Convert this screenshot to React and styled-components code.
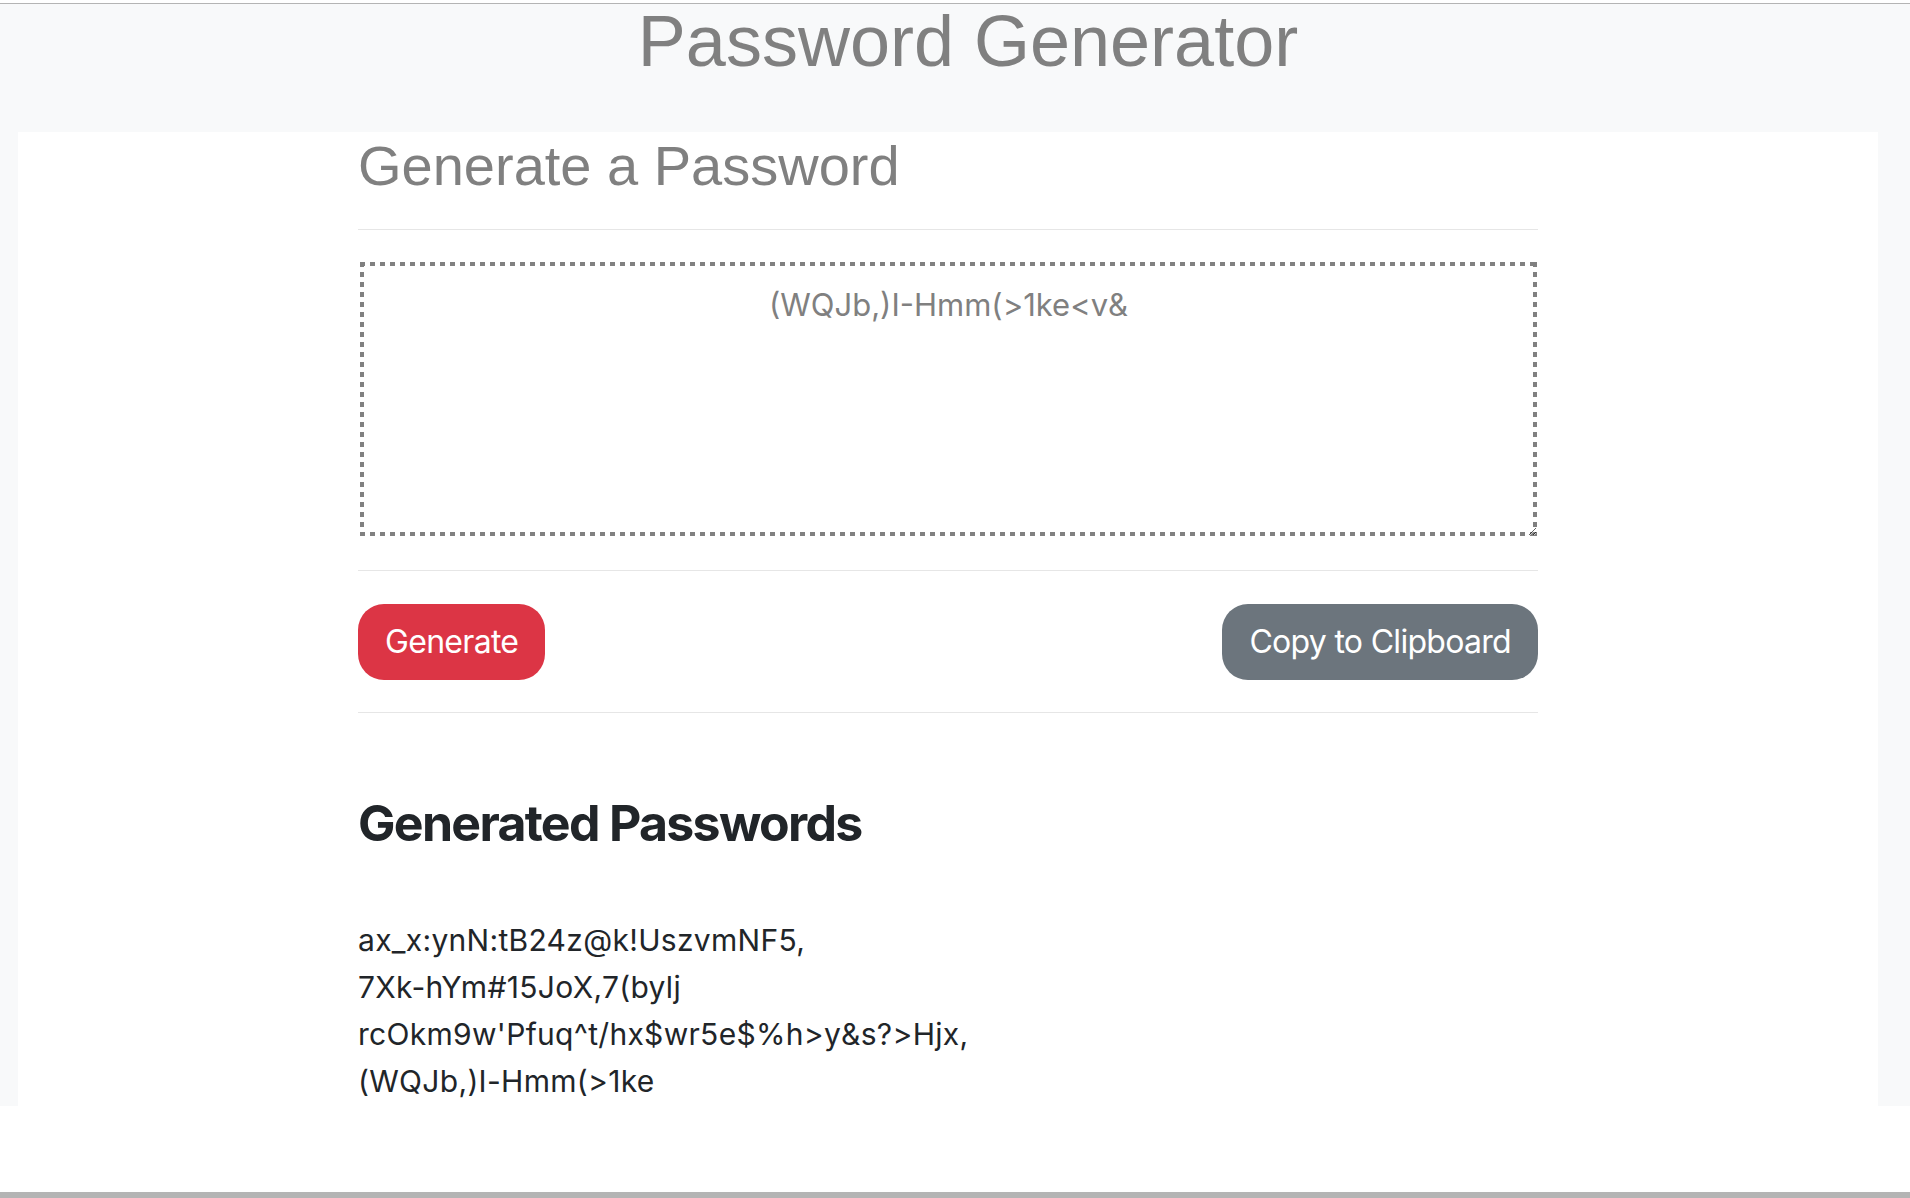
import React from "react";
import styled, { createGlobalStyle } from "styled-components";

const GlobalStyle = createGlobalStyle`
  html, body {
    margin: 0;
    background: #fff;
  }
  body {
    font-family: Inter, "Noto Sans", sans-serif;
    color: #212529;
  }
`;

const Frame = styled.div`
  height: 1198px;
  padding-top: 3px;
  box-sizing: border-box;
  display: flex;
  flex-direction: column;
`;

const Shell = styled.main`
  background: #f8f9fa;
  border-top: 1px solid #b4b4b4;
`;

const Title = styled.h1`
  margin: 1px 0 0;
  padding-left: 26px;
  text-align: center;
  font: 400 72px/1 "Liberation Sans", Arial, sans-serif;
  color: #808080;
`;

const CardWrap = styled.div`
  margin-top: 55px;
  padding: 0 32px 0 18px;
`;

const Card = styled.section`
  background: #fff;
  padding-bottom: 1px;
`;

const Column = styled.div`
  width: 1180px;
  margin: 0 auto;
`;

const SubTitle = styled.h2`
  margin: 2px 0 0;
  font: 400 56px/1.2 "Liberation Sans", Arial, sans-serif;
  color: #808080;
`;

const Rule = styled.hr`
  margin: ${(p) => p.$gap}px 0 0;
  border: 0;
  border-top: 1px solid #e6e6e6;
`;

const dots = "#808080";

const PasswordBox = styled.textarea`
  display: block;
  box-sizing: border-box;
  width: calc(100% - 3px);
  height: 274px;
  margin: 32px 1px 0 2px;
  padding: 20px 16px 16px;
  border: 0;
  outline: none;
  resize: both;
  text-align: center;
  font: 400 31px/1.5 Inter, "Noto Sans", sans-serif;
  color: #808080;
  background:
    linear-gradient(to right, ${dots} 50%, transparent 0) top left / 10px 4px repeat-x,
    linear-gradient(to right, ${dots} 50%, transparent 0) bottom left / 10px 4px repeat-x,
    linear-gradient(to bottom, ${dots} 50%, transparent 0) top left / 4px 10px repeat-y,
    linear-gradient(to bottom, ${dots} 50%, transparent 0) top right / 4px 10px repeat-y,
    #fff;
`;

const ButtonRow = styled.div`
  margin-top: 33px;
  display: flex;
  justify-content: space-between;
  align-items: center;
`;

const Button = styled.button`
  height: 76px;
  padding: 0 27px;
  border: 0;
  border-radius: 26px;
  background: ${(p) => (p.$tone === "danger" ? "#dc3545" : "#6c757d")};
  color: #fff;
  font: 400 32px/1 Inter, "Noto Sans", sans-serif;
  letter-spacing: -0.7px;
  cursor: pointer;
`;

const Heading = styled.h3`
  margin: 80px 0 0;
  font: 700 50px/1.2 Inter, "Noto Sans", sans-serif;
  letter-spacing: -1.7px;
  color: #212529;
`;

const List = styled.p`
  margin: 64px 0 0;
  font: 400 30px/47px Inter, "Noto Sans", sans-serif;
  letter-spacing: 0.3px;
  color: #212529;
`;

const Filler = styled.div`
  flex: 1;
`;

const BottomBar = styled.div`
  height: 6px;
  background: #b4b4b4;
`;

const history = [
  "ax_x:ynN:tB24z@k!UszvmNF5,",
  "7Xk-hYm#15JoX,7(bylj",
  "rcOkm9w'Pfuq^t/hx$wr5e$%h>y&s?>Hjx,",
  "(WQJb,)I-Hmm(>1ke",
];

export default function App() {
  return (
    <>
      <GlobalStyle />
      <Frame>
        <Shell>
          <Title>Password Generator</Title>
          <CardWrap>
            <Card>
              <Column>
                <SubTitle>Generate a Password</SubTitle>
                <Rule $gap={30} />
                <PasswordBox readOnly defaultValue="(WQJb,)I-Hmm(>1ke<v&" />
                <Rule $gap={34} />
                <ButtonRow>
                  <Button $tone="danger">Generate</Button>
                  <Button $tone="secondary">Copy to Clipboard</Button>
                </ButtonRow>
                <Rule $gap={32} />
                <Heading>Generated Passwords</Heading>
                <List>
                  {history.map((pw) => (
                    <React.Fragment key={pw}>
                      {pw}
                      <br />
                    </React.Fragment>
                  ))}
                </List>
              </Column>
            </Card>
          </CardWrap>
        </Shell>
        <Filler />
        <BottomBar />
      </Frame>
    </>
  );
}
